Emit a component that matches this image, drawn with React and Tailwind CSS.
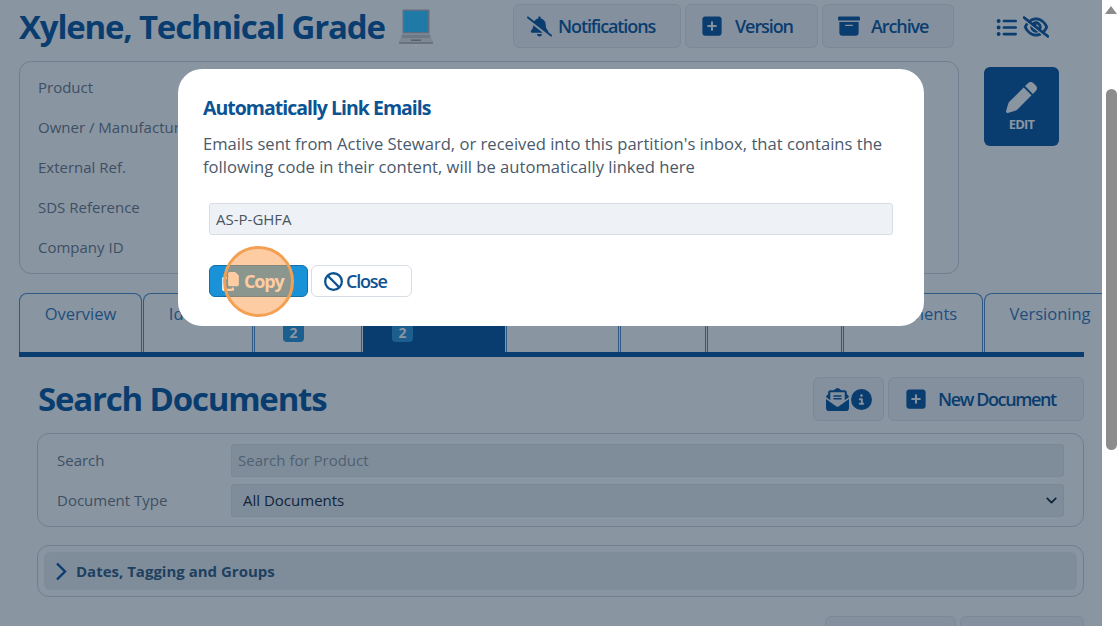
import React from "react";
import { ChevronDown } from "lucide-react";
import { FaBellSlash, FaSquarePlus, FaBoxArchive, FaListUl, FaRegEyeSlash, FaPen, FaEnvelopeOpenText, FaCircleInfo, FaCopy, FaBan } from "react-icons/fa6";

const NAVY = "#0a3d6f";

function ToolButton({ icon, label, className = "" }) {
  return (
    <div className={`flex h-[44px] items-center justify-start rounded-md border border-[#7b8997] bg-[#84909e] text-[18px] font-semibold tracking-[-1.1px] text-[#0a3d6f] ${className}`}>
      {icon}
      {label}
    </div>
  );
}

function Laptop() {
  return (
    <svg width="34" height="36" viewBox="0 0 34 36">
      <rect x="3.5" y="0.5" width="27" height="24" rx="1" fill="#5f6f7f" />
      <rect x="5" y="2" width="24" height="21" fill="#1f7aa8" />
      <path d="M3 25h28l3 8H0z" fill="#7d8894" />
      <rect x="3" y="26" width="28" height="3" fill="#6d7885" />
      <rect x="12" y="30.5" width="10" height="1.5" fill="#56616d" />
      <rect x="0" y="33" width="34" height="2" fill="#68737f" />
    </svg>
  );
}

function Tab({ label, w, badge, active }) {
  return (
    <div
      className={`relative flex h-[59px] shrink-0 flex-col items-center rounded-t-lg border border-b-0 pt-[7px] text-[16.5px] text-[#1f4e7c] ${active ? "border-[#0a3d6f] bg-[#0a3d6f]" : "border-[#2f5a85]"}`}
      style={{ width: w }}
    >
      <span className="h-[26px] leading-[26px]">{label}</span>
      {badge && (
        <span className="absolute top-[28px] left-[28px] flex h-[20px] w-[21px] items-center justify-center rounded bg-[#1c5f8f] text-[14px] font-bold text-[#8a95a2]">
          {badge}
        </span>
      )}
    </div>
  );
}

function InfoRow({ label }) {
  return <div className="h-[40px] text-[15px] leading-[40px] text-[#3d4f63]">{label}</div>;
}

export default function App() {
  return (
    <div className="relative flex h-[626px] w-[1120px] overflow-hidden bg-white" style={{ fontFamily: '"Open Sans", sans-serif' }}>
      <main className="h-full w-[1102px] shrink-0 overflow-hidden bg-[#8a95a2] pl-[19px]">
        {/* Header */}
        <div className="flex h-[62px] items-start">
          <div className="flex h-[54px] w-[494px] items-center gap-[14px]">
            <h1 className="text-[33px] font-bold tracking-[-1.2px] whitespace-nowrap text-[#0a3d6f]">Xylene, Technical Grade</h1>
            <Laptop />
          </div>
          <div className="mt-[4px] flex gap-[4px]">
            <ToolButton className="w-[168px] gap-[6px] pl-[13px]" label="Notifications" icon={<FaBellSlash size={25} />} />
            <ToolButton className="w-[133px] gap-[12px] pl-[15px]" label="Version" icon={<FaSquarePlus size={22} />} />
            <ToolButton className="w-[132px] gap-[11px] pl-[15px]" label="Archive" icon={<FaBoxArchive size={22} />} />
          </div>
          <div className="mt-[14px] ml-[42px] flex items-center gap-[6px] text-[#0a3d6f]">
            <FaListUl size={21} />
            <FaRegEyeSlash size={26} stroke="currentColor" strokeWidth={24} />
          </div>
        </div>

        {/* Summary */}
        <div className="-mt-px flex items-start">
          <div className="h-[213px] w-[940px] rounded-xl border border-[#6f7f90] px-[18px] pt-[5px]">
            <InfoRow label="Product" />
            <InfoRow label="Owner / Manufacturer" />
            <InfoRow label="External Ref." />
            <InfoRow label="SDS Reference" />
            <InfoRow label="Company ID" />
          </div>
          <div className="mt-[6px] ml-[25px] flex h-[79px] w-[75px] flex-col items-center justify-center rounded-md bg-[#0a3d6f] text-[#8a95a2]">
            <FaPen size={31} />
            <span className="mt-[3px] text-[13px] leading-[16px] font-bold tracking-[-0.8px]">EDIT</span>
          </div>
        </div>

        {/* Tabs */}
        <div className="mt-[19px] flex w-[1065px] gap-px border-b-[5px] border-[#0a3d6f]">
          <Tab label="Overview" w={123} />
          <Tab label="Identity" w={110} />
          <Tab label="" w={108} badge="2" />
          <Tab label="" w={142} badge="2" active />
          <Tab label="" w={113} />
          <Tab label="" w={86} />
          <Tab label="" w={135} />
          <Tab label="Documents" w={140} />
          <Tab label="Versioning" w={132} />
        </div>

        {/* Documents header */}
        <div className="flex h-[68px] w-[1065px] items-center justify-between pt-[16px] pl-[19px]">
          <h2 className="text-[33px] font-bold tracking-[-1.2px] text-[#0a3d6f]">Search Documents</h2>
          <div className="flex gap-[4px]">
            <div className="flex h-[44px] w-[71px] items-center justify-center gap-[2px] rounded-md border border-[#7b8997] bg-[#84909e] text-[#0a3d6f]">
              <FaEnvelopeOpenText size={23} />
              <FaCircleInfo size={21} />
            </div>
            <ToolButton className="w-[196px] gap-[11px] pl-[16px] tracking-[-1.4px]" label="New Document" icon={<FaSquarePlus size={22} />} />
          </div>
        </div>

        {/* Search card */}
        <div className="mt-[8px] ml-[18px] flex h-[94px] w-[1047px] flex-col gap-[7px] rounded-xl border border-[#6f7f90] pt-[10px] pr-[19px] pl-[19px]">
          <div className="flex h-[33px] items-center">
            <span className="w-[174px] shrink-0 text-[15px] text-[#3d4f63]">Search</span>
            <div className="flex h-[33px] flex-1 items-center rounded-[3px] border border-[#7a8896] bg-[#7f8d9b] px-[6px] text-[15px] text-[#4f6070]">Search for Product</div>
          </div>
          <div className="flex h-[33px] items-center">
            <span className="w-[174px] shrink-0 text-[15px] text-[#3d4f63]">Document Type</span>
            <div className="flex h-[33px] flex-1 items-center justify-between rounded-[3px] border border-[#7a8896] bg-[#7f8d9b] pr-[3px] pl-[11px] text-[15px] text-[#10243a]">
              All Documents
              <ChevronDown size={17} strokeWidth={2.6} />
            </div>
          </div>
        </div>

        {/* Accordion */}
        <div className="mt-[18px] ml-[18px] flex h-[52px] w-[1047px] items-center rounded-xl border border-[#6f7f90] px-[6px]">
          <div className="flex h-[38px] flex-1 items-center gap-[9px] rounded-md bg-[#7f8d9b] pl-[11px] text-[15px] font-bold text-[#20405f]">
            <svg width="12" height="19" viewBox="0 0 12 19" fill="none" stroke={NAVY} strokeWidth="2.4">
              <path d="M2 1.5l8 8-8 8" />
            </svg>
            Dates, Tagging and Groups
          </div>
        </div>

        {/* Bottom buttons (cut off) */}
        <div className="mt-[19px] flex w-[1065px] justify-end gap-[4px]">
          <div className="h-[30px] w-[131px] rounded-md border border-[#7b8997] bg-[#84909e]" />
          <div className="h-[30px] w-[124px] rounded-md border border-[#7b8997] bg-[#84909e]" />
        </div>
      </main>

      {/* Scrollbar */}
      <div className="relative h-full flex-1 bg-white">
        <div className="absolute top-[6px] left-[3px] h-0 w-0 border-x-[6px] border-b-[8px] border-x-transparent border-b-[#8c8c8c]" />
        <div className="absolute top-[89px] left-[4px] h-[361px] w-[11px] rounded-full bg-[#8c8c8c]" />
      </div>

      {/* Modal */}
      <div className="absolute top-[69px] left-[178px] h-[257px] w-[746px] rounded-[24px] bg-white px-[25px] pt-[25px]">
        <h3 className="text-[19.5px] leading-[28px] font-bold tracking-[-1px] text-[#0c5394]">Automatically Link Emails</h3>
        <p className="mt-[10px] text-[16.6px] leading-[23px] text-[#4a5a6b]">
          Emails sent from Active Steward, or received into this partition's inbox, that contains the following code in their content, will be automatically linked here
        </p>
        <div className="mt-[25px] ml-[6px] flex h-[32px] w-[684px] items-center rounded-[3px] border border-[#d7dde5] bg-[#eef1f6] px-[6px] text-[15px] text-[#4a5560]">AS-P-GHFA</div>
        <div className="mt-[30px] ml-[6px] flex gap-[3px]">
          <div className="flex h-[32px] w-[99px] items-center gap-[4px] rounded-md border border-[#1170a8] bg-[#1a92d8] pl-[11px] text-[18px] font-bold tracking-[-1.2px] text-white">
            <FaCopy size={19} />
            Copy
          </div>
          <div className="flex h-[32px] w-[101px] items-center gap-[3px] rounded-md border border-[#d7dde5] bg-white pl-[12px] text-[18px] font-semibold tracking-[-1.2px] text-[#0f5290]">
            <FaBan size={19} />
            Close
          </div>
        </div>
      </div>

      {/* Click highlight */}
      <div className="absolute top-[246px] left-[223px] h-[71px] w-[71px] rounded-full border-[3px] border-[#f3a052] bg-[#fb9a45]/50" />
    </div>
  );
}
